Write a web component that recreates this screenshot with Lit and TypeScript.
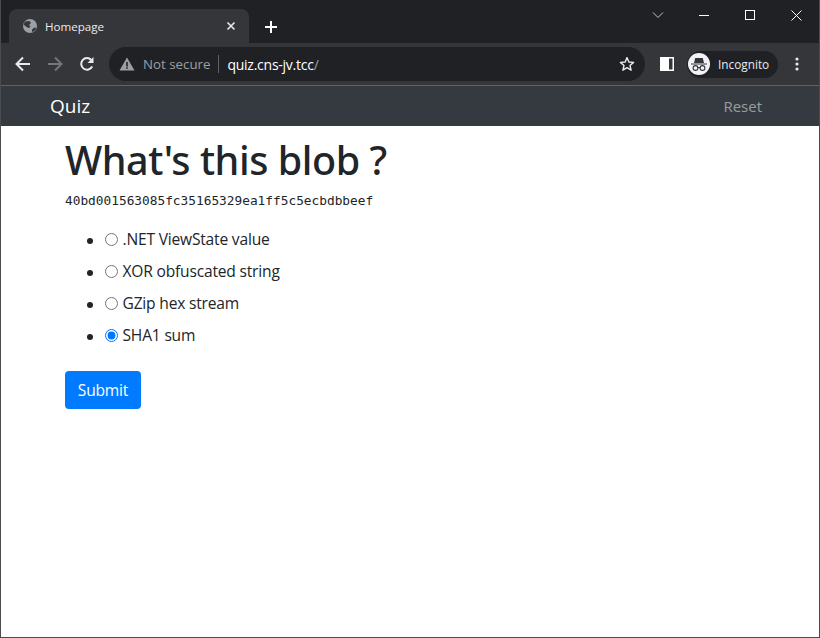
import { LitElement, html, css } from "lit";
import { customElement } from "lit/decorators.js";

const OPTIONS = [
  { label: ".NET ViewState value", checked: false },
  { label: "XOR obfuscated string", checked: false },
  { label: "GZip hex stream", checked: false },
  { label: "SHA1 sum", checked: true },
];

@customElement("app-root")
export class AppRoot extends LitElement {
  static styles = css`
    :host {
      display: flex;
      flex-direction: column;
      width: 820px;
      height: 638px;
      box-sizing: border-box;
      border-left: 1px solid #4a4b4d;
      border-right: 1px solid #4a4b4d;
      border-bottom: 1px solid #4a4b4d;
      font-family: "Open Sans", "Noto Sans", sans-serif;
      background: #fff;
      color: #212529;
      overflow: hidden;
    }
    svg { display: block; flex: none; }
    .titlebar {
      height: 43px;
      flex: none;
      background: #202124;
      display: flex;
      align-items: flex-end;
      padding-left: 8px;
      box-sizing: border-box;
    }
    .tab {
      width: 240px;
      height: 34px;
      background: #35363a;
      border-radius: 8px 8px 0 0;
      display: flex;
      align-items: center;
      padding: 0 10px 0 13px;
      box-sizing: border-box;
      color: #e8eaed;
      font-size: 11.6px;
      gap: 7px;
    }
    .tab-title { flex: 1; }
    .newtab { margin-left: 15px; margin-bottom: 9px; }
    .spacer { flex: 1; }
    .winctl {
      align-self: flex-start;
      display: flex;
      align-items: center;
      height: 30px;
    }
    .winbtn {
      width: 46px;
      height: 30px;
      display: flex;
      align-items: center;
      justify-content: center;
    }
    .toolbar {
      height: 42px;
      flex: none;
      background: #35363a;
      display: flex;
      align-items: center;
      box-sizing: border-box;
      padding-left: 14px;
    }
    .navs { display: flex; gap: 16px; align-items: center; }
    .omni {
      width: 536px;
      height: 34px;
      margin-left: 14px;
      background: #202124;
      border-radius: 17px;
      display: flex;
      align-items: center;
      padding: 0 10px 0 10px;
      box-sizing: border-box;
      font-size: 13.3px;
    }
    .ns { color: #9aa0a6; margin-left: 8px; }
    .sep { width: 1px; height: 18px; background: #5f6368; margin: 0 8px 0 8px; }
    .url { color: #fff; flex: 1; font-size: 14px; letter-spacing: -0.25px; }
    .url span { color: #9aa0a6; }
    .panel { margin-left: 15px; }
    .profile {
      margin-left: 13px;
      height: 27px;
      width: 91px;
      background: #202124;
      border-radius: 14px;
      display: flex;
      align-items: center;
      gap: 8px;
      padding-left: 1px;
      box-sizing: border-box;
      color: #e8eaed;
      font-size: 11.8px;
    }
    .avatar {
      width: 22px;
      height: 22px;
      border-radius: 50%;
      background: #f1f3f4;
      display: flex;
      align-items: center;
      justify-content: center;
    }
    .menu { margin-left: 17px; }
    .rule { height: 1px; flex: none; background: #5f6368; }
    .navbar {
      height: 40px;
      flex: none;
      background: #343a40;
      display: flex;
      align-items: center;
      justify-content: space-between;
      padding: 0 57px 0 49px;
    }
    .brand { color: #fff; font-size: 19px; }
    .reset { color: rgba(255, 255, 255, 0.5); font-size: 15px; }
    main { padding: 10px 0 0 64px; }
    h1 {
      margin: 0 0 7px;
      font-family: "Noto Sans", sans-serif;
      font-size: 39.5px;
      font-weight: 500;
      letter-spacing: -0.45px;
      line-height: 48px;
      color: #212529;
    }
    code {
      display: block;
      font-family: "DejaVu Sans Mono", monospace;
      font-size: 12.8px;
      line-height: 20px;
      color: #212529;
    }
    ul { margin: 16px 0 16px; padding: 0 0 0 40px; }
    li { height: 24px; line-height: 24px; margin-bottom: 8px; font-size: 15.6px; letter-spacing: -0.2px; }
    label { display: inline-flex; align-items: center; }
    input { width: 13px; height: 13px; margin: 0 4.5px 0 0; accent-color: #0075ff; }
    button {
      display: block;
      margin-top: 24px;
      width: 76px;
      height: 38px;
      padding: 0;
      border: 0;
      border-radius: 4px;
      background: #007bff;
      color: #fff;
      font: 15.6px "Open Sans", "Noto Sans", sans-serif;
      letter-spacing: -0.2px;
    }
  `;

  render() {
    return html`
      <div class="titlebar">
        <div class="tab">
          <svg width="16" height="16" viewBox="0 0 16 16">
            <circle cx="8" cy="8" r="7" fill="#9aa0a6" />
            <path d="M3 3.5 7.5 3 9 5 7 7 8.5 8.5 7 10 4.5 9 1.5 6.5Z" fill="#35363a" />
            <path d="M10 11.5 12.5 9.5 14.5 10 12.5 13 10 14Z" fill="#35363a" />
          </svg>
          <span class="tab-title">Homepage</span>
          <svg width="16" height="16" viewBox="0 0 16 16">
            <path d="M4.5 4.5 11.5 11.5M11.5 4.5 4.5 11.5" stroke="#e8eaed" stroke-width="1.6" />
          </svg>
        </div>
        <svg class="newtab" width="14" height="14" viewBox="0 0 14 14">
          <path d="M7 1V13M1 7H13" stroke="#fff" stroke-width="2" />
        </svg>
        <div class="spacer"></div>
        <div class="winctl">
          <div class="winbtn">
            <svg width="12" height="8" viewBox="0 0 12 8"><path d="M1 1.5 6 6.5 11 1.5" fill="none" stroke="#c4c6c9" /></svg>
          </div>
          <div class="winbtn">
            <svg width="10" height="10" viewBox="0 0 10 10"><path d="M0 5.5H10" stroke="#fff" /></svg>
          </div>
          <div class="winbtn">
            <svg width="10" height="10" viewBox="0 0 10 10"><rect x=".5" y=".5" width="9" height="9" fill="none" stroke="#fff" /></svg>
          </div>
          <div class="winbtn">
            <svg width="11" height="11" viewBox="0 0 11 11"><path d="M.5.5 10.5 10.5M10.5.5 .5 10.5" stroke="#fff" /></svg>
          </div>
        </div>
      </div>
      <div class="toolbar">
        <div class="navs">
          <svg width="16" height="16" viewBox="0 0 16 16"><path d="M15 8H2M8 1.5 1.5 8 8 14.5" fill="none" stroke="#e8eaed" stroke-width="2" /></svg>
          <svg width="16" height="16" viewBox="0 0 16 16"><path d="M1 8H14M8 1.5 14.5 8 8 14.5" fill="none" stroke="#74777b" stroke-width="2" /></svg>
          <svg width="16" height="16" viewBox="0 0 16 16">
            <path d="M13.2 10.5A5.8 5.8 0 1 1 12.3 4" fill="none" stroke="#e8eaed" stroke-width="2" />
            <path d="M14.5 1V7H8.5Z" fill="#e8eaed" />
          </svg>
        </div>
        <div class="omni">
          <svg width="16" height="16" viewBox="0 0 16 16">
            <path d="M8 1.5 15.5 14.5H.5Z" fill="#9aa0a6" />
            <path d="M7.2 6H8.8V10.4H7.2ZM7.2 11.2H8.8V12.8H7.2Z" fill="#202124" />
          </svg>
          <span class="ns">Not secure</span>
          <div class="sep"></div>
          <span class="url">quiz.cns-jv.tcc<span>/</span></span>
          <svg width="16" height="16" viewBox="0 0 16 16">
            <path d="M8 1.6 9.8 6 14.6 6.4 11 9.5 12.1 14.2 8 11.7 3.9 14.2 5 9.5 1.4 6.4 6.2 6Z" fill="none" stroke="#e8eaed" stroke-width="1.4" stroke-linejoin="round" />
          </svg>
        </div>
        <svg class="panel" width="14" height="14" viewBox="0 0 14 14">
          <path d="M0 0H14V14H0Z" fill="#fff" />
          <rect x="9" y="1.5" width="3.5" height="11" fill="#35363a" />
        </svg>
        <div class="profile">
          <div class="avatar">
            <svg width="18" height="18" viewBox="0 0 18 18">
              <path d="M1 8.5H17V9.5H1ZM4 8 5.2 3H12.8L14 8Z" fill="#35363a" />
              <circle cx="5.5" cy="13" r="2.4" fill="none" stroke="#35363a" stroke-width="1.1" />
              <circle cx="12.5" cy="13" r="2.4" fill="none" stroke="#35363a" stroke-width="1.1" />
              <path d="M7.9 12.6H10.1" stroke="#35363a" stroke-width="1.1" />
            </svg>
          </div>
          <span>Incognito</span>
        </div>
        <svg class="menu" width="4" height="14" viewBox="0 0 4 14">
          <circle cx="2" cy="2" r="1.6" fill="#e8eaed" />
          <circle cx="2" cy="7" r="1.6" fill="#e8eaed" />
          <circle cx="2" cy="12" r="1.6" fill="#e8eaed" />
        </svg>
      </div>
      <div class="rule"></div>
      <nav class="navbar">
        <span class="brand">Quiz</span>
        <span class="reset">Reset</span>
      </nav>
      <main>
        <h1>What's this blob ?</h1>
        <code>40bd001563085fc35165329ea1ff5c5ecbdbbeef</code>
        <ul>
          ${OPTIONS.map(
            (o) => html`<li>
              <label><input type="radio" name="answer" ?checked=${o.checked} />${o.label}</label>
            </li>`
          )}
        </ul>
        <button>Submit</button>
      </main>
    `;
  }
}
